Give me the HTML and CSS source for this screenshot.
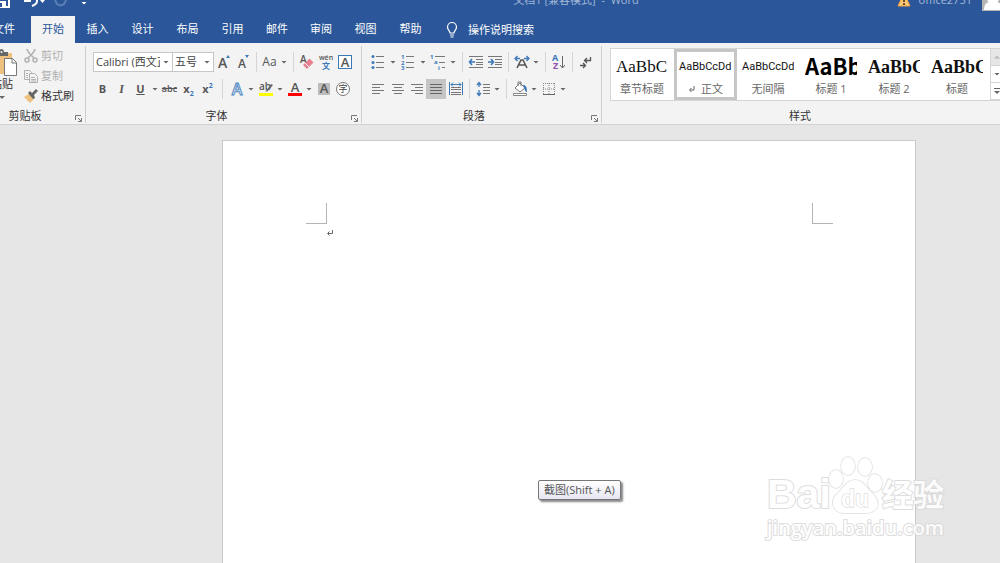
FILE: index.html
```html
<!DOCTYPE html>
<html lang="zh-CN">
<head>
<meta charset="utf-8">
<title>文档1 [兼容模式] - Word</title>
<link rel="stylesheet" href="styles.css">
</head>
<body>
<header class="top">
  <div class="titlebar">
    <div class="quick">
      <button class="q" aria-label="保存"><svg width="16" height="16" viewBox="0 0 16 16"><path d="M1 1h14v14H3l-2-2z" fill="none" stroke="#fff" stroke-width="2"/><path d="M4 9h8v6H4z" fill="#fff"/><path d="M6 11h2v4H6z" fill="#2b579a"/></svg></button>
      <button class="q undo" aria-label="撤消"><svg width="22" height="16" viewBox="0 0 22 16"><path d="M1 3v6h6M2 8c4-5 11-4 11 1 0 3-2 4-5 5" fill="none" stroke="#fff" stroke-width="2"/><path d="M16 8h5l-2.500 3z" fill="#fff"/></svg></button>
      <button class="q redo" aria-label="重复"><svg width="14" height="16" viewBox="0 0 14 16"><path d="M4 4a5 5 0 1 0 7 2M11 2v5H7" fill="none" stroke="#5f81b8" stroke-width="2"/></svg></button>
      <button class="q" aria-label="自定义"><svg width="8" height="16" viewBox="0 0 8 16"><path d="M1 7h6v1H1zM1.500 10h5L4 12.500z" fill="#fff"/></svg></button>
    </div>
    <div class="doc-name">文档1 [兼容模式] &nbsp;-&nbsp; Word</div>
    <div class="account">
      <svg width="14" height="14" viewBox="0 0 14 14"><path d="M7 0l6 13H1z" fill="#ffc977" stroke="#f1a33c"/><path d="M6 4h2v5H6zM6 10h2v2H6z" fill="#6b4a1c"/></svg>
      <span class="user">office2751</span>
      <svg class="avatar" width="22" height="22" viewBox="0 0 22 22"><rect width="22" height="22" fill="#b5b5b5"/><circle cx="11" cy="9" r="6" fill="#fff"/><path d="M2 21c0-6 3-8 6-8h6c3 0 6 2 6 8z" fill="#fff"/></svg>
    </div>
  </div>
  <nav class="tabs">
    <button class="tab file">文件</button>
    <button class="tab active">开始</button>
    <button class="tab">插入</button>
    <button class="tab">设计</button>
    <button class="tab">布局</button>
    <button class="tab">引用</button>
    <button class="tab short">邮件</button>
    <button class="tab short">审阅</button>
    <button class="tab">视图</button>
    <button class="tab">帮助</button>
    <button class="tell"><svg width="12" height="16" viewBox="0 0 12 16"><path d="M4 11c0-2-2.500-3-2.500-6a4.500 4.500 0 0 1 9 0c0 3-2.500 4-2.500 6zM4 13h4M4.500 15h3" fill="none" stroke="#fff" stroke-width="1.200"/></svg>操作说明搜索</button>
  </nav>
</header>

<main class="ribbon">
  <section class="group clipboard">
    <div class="clip-body">
      <button class="paste">
        <svg width="32" height="28" viewBox="0 0 32 28"><path d="M4 4h22v21H4z" fill="#eec27e"/><path d="M10 7V3h3c0-4 5-4 5 0h4v4z" fill="#686868"/><circle cx="15.500" cy="3" r="1" fill="#f3f3f3"/><path d="M18.500 9.500h8l4 4v13h-12z" fill="#fff" stroke="#777"/><path d="M26 9.500v4.500h4.500" fill="none" stroke="#777"/></svg>
        <span>粘贴</span><i class="tri"></i>
      </button>
      <div class="clip-list">
        <button class="clip off"><svg width="14" height="14" viewBox="0 0 14 14"><g fill="none" stroke="#b0b0b0" stroke-width="1.500"><path d="M3 0c1 4 4 6 7 9M11 0c-1 4-4 6-7 9"/><circle cx="3" cy="11" r="2"/><circle cx="11" cy="11" r="2"/></g></svg>剪切</button>
        <button class="clip off"><svg width="14" height="14" viewBox="0 0 14 14"><path d="M.5 1.500h5l2 2v7h-7z" fill="#f3f3f3" stroke="#b0b0b0"/><path d="M5.500 4.500h5l3 3v6h-8z" fill="#f3f3f3" stroke="#b0b0b0"/><path d="M2 4.500h2M2 6.500h2M2 8.500h2M7 8.500h4M7 10.500h5M7 12h5" stroke="#b0b0b0"/></svg>复制</button>
        <button class="clip"><svg width="14" height="14" viewBox="0 0 14 14"><path d="M0 8l5-3 5 5-4 4z" fill="#eec27e"/><path d="M4 4l2-2 2 2 4-4 2 2-4 4 1 3-2 1z" fill="#666"/></svg>格式刷</button>
      </div>
    </div>
    <div class="foot"><span>剪贴板</span><button class="launch" aria-label="剪贴板设置"><svg width="7" height="7" viewBox="0 0 7 7"><path d="M.5 5V.5H6M3 3l3 3M6.500 3v3.500H3" fill="none" stroke="#777"/></svg></button></div>
  </section>

  <section class="group font">
    <div class="row">
      <label class="combo family"><select aria-label="字体"><option>Calibri (西文正文)</option></select><i class="tri"></i></label>
      <label class="combo size"><select aria-label="字号"><option>五号</option></select><i class="tri"></i></label>
      <button class="tool" aria-label="增大字号"><svg width="16" height="16" viewBox="0 0 16 16"><text x="2" y="14" class="letter l14">A</text><path d="M10 4l2-3 2 3z" fill="#3c78b8"/></svg></button>
      <button class="tool" aria-label="减小字号"><svg width="16" height="16" viewBox="0 0 16 16"><text x="3" y="14" class="letter l12">A</text><path d="M10 1h4l-2 3z" fill="#3c78b8"/></svg></button>
      <i class="sep"></i>
      <button class="tool case">Aa</button><button class="drop" aria-label="更改大小写选项"><i class="tri"></i></button>
      <i class="sep"></i>
      <button class="tool" aria-label="清除格式"><svg width="16" height="16" viewBox="0 0 16 16"><text x="1" y="9" class="letter l10">A</text><path d="M4 11l6.500-6.500 4 4L8 15z" fill="#e8808f"/><path d="M6 9l4 4" stroke="#f3f3f3"/></svg></button>
      <button class="tool" aria-label="拼音指南"><svg width="16" height="16" viewBox="0 0 16 16"><text x="8" y="6" text-anchor="middle" class="letter l7">wén</text><text x="8" y="15" text-anchor="middle" class="blue l8">文</text></svg></button>
      <button class="tool" aria-label="字符边框"><svg width="16" height="16" viewBox="0 0 16 16"><rect x="1.500" y="1.500" width="13" height="13" fill="#fff" stroke="#3c78b8"/><text x="8" y="13" text-anchor="middle" class="letter l13">A</text></svg></button>
    </div>
    <div class="row">
      <button class="tool bold">B</button>
      <button class="tool italic">I</button>
      <button class="tool under">U</button><button class="drop" aria-label="下划线选项"><i class="tri"></i></button>
      <button class="tool strike">abc</button>
      <button class="tool script">x<sub>2</sub></button>
      <button class="tool script">x<sup>2</sup></button>
      <i class="sep wide"></i>
      <button class="tool" aria-label="文本效果"><svg width="16" height="16" viewBox="0 0 16 16"><text x="8" y="14" text-anchor="middle" class="effect">A</text></svg></button><button class="drop" aria-label="文本效果选项"><i class="tri"></i></button>
      <button class="tool" aria-label="突出显示"><svg width="16" height="16" viewBox="0 0 16 16"><text x="1" y="9" class="letter l10">ab</text><path d="M8 10l5-7 2 1-5 6-3 1z" fill="#666"/><path d="M1 12h14v3H1z" fill="#ff0"/></svg></button><button class="drop" aria-label="突出显示颜色"><i class="tri"></i></button>
      <button class="tool" aria-label="字体颜色"><svg width="16" height="16" viewBox="0 0 16 16"><text x="8" y="11" text-anchor="middle" class="letter l13">A</text><path d="M1 12h14v3H1z" fill="red"/></svg></button><button class="drop" aria-label="字体颜色选项"><i class="tri"></i></button>
      <button class="tool" aria-label="字符底纹"><svg width="16" height="16" viewBox="0 0 16 16"><path d="M2 2h12v12H2z" fill="#bcbcbc"/><text x="8" y="12" text-anchor="middle" class="letter l13">A</text></svg></button>
      <button class="tool" aria-label="带圈字符"><svg width="16" height="16" viewBox="0 0 16 16"><circle cx="8" cy="8" r="6.500" fill="#fff" stroke="#777"/><text x="8" y="11" text-anchor="middle" class="glyph">字</text></svg></button>
    </div>
    <div class="foot"><span>字体</span><button class="launch" aria-label="字体设置"><svg width="7" height="7" viewBox="0 0 7 7"><path d="M.5 5V.5H6M3 3l3 3M6.500 3v3.500H3" fill="none" stroke="#777"/></svg></button></div>
  </section>

  <section class="group para">
    <div class="row">
      <button class="tool list" aria-label="项目符号"><svg width="16" height="16" viewBox="0 0 16 16"><path d="M6 2.500h8M6 8.500h8M6 13.500h8" stroke="#777"/><g fill="#3c78b8"><circle cx="3" cy="2.500" r="1.500"/><circle cx="3" cy="8.500" r="1.500"/><circle cx="3" cy="13.500" r="1.500"/></g></svg></button><button class="drop" aria-label="项目符号选项"><i class="tri"></i></button>
      <button class="tool list" aria-label="编号"><svg width="16" height="16" viewBox="0 0 16 16"><path d="M6 2.500h8M6 8.500h8M6 13.500h8" stroke="#777"/><text x="1" y="5" class="blue l6">1</text><text x="1" y="11" class="blue l6">2</text><text x="1" y="16" class="blue l6">3</text></svg></button><button class="drop" aria-label="编号选项"><i class="tri"></i></button>
      <button class="tool list" aria-label="多级列表"><svg width="16" height="16" viewBox="0 0 16 16"><path d="M5 2.500h10M9 8.500h6M12 13.500h3" stroke="#777"/><text x="0" y="5" class="blue l6">1</text><text x="4" y="10" class="blue l6">a</text><text x="8" y="16" class="blue l6">i</text></svg></button><button class="drop" aria-label="多级列表选项"><i class="tri"></i></button>
      <i class="sep"></i>
      <button class="tool" aria-label="减少缩进量"><svg width="16" height="16" viewBox="0 0 16 16"><path d="M1 2.500h14M8 5.500h7M8 8.500h7M8 10.500h7M1 13.500h14" stroke="#777"/><path d="M7 8H2M4 5L1.500 8 4 11" fill="none" stroke="#3c78b8" stroke-width="1.600"/></svg></button>
      <button class="tool" aria-label="增加缩进量"><svg width="16" height="16" viewBox="0 0 16 16"><path d="M1 2.500h14M8 5.500h7M8 8.500h7M8 10.500h7M1 13.500h14" stroke="#777"/><path d="M1 8h5M4 5l2.500 3L4 11" fill="none" stroke="#3c78b8" stroke-width="1.600"/></svg></button>
      <i class="sep"></i>
      <button class="tool" aria-label="中文版式"><svg width="16" height="16" viewBox="0 0 16 16"><path d="M3 14l4-8h2l4 8M5 11h6" fill="none" stroke="#555" stroke-width="1.600"/><path d="M6 4.500H2M3.500 2L1 4.500 3.500 7M10 4.500h4M12.500 2L15 4.500 12.500 7" fill="none" stroke="#3c78b8" stroke-width="1.300"/></svg></button><button class="drop" aria-label="中文版式选项"><i class="tri"></i></button>
      <i class="sep"></i>
      <button class="tool" aria-label="排序"><svg width="16" height="16" viewBox="0 0 16 16"><text x="1" y="7" class="blue l9">A</text><text x="2" y="15" class="purple">Z</text><path d="M11.500 2v12M9 11l2.500 3 2.500-3" fill="none" stroke="#666"/></svg></button>
      <i class="sep"></i>
      <button class="tool" aria-label="显示编辑标记"><svg width="16" height="16" viewBox="0 0 16 16"><path d="M12.500 3v3.500H7M9 4L6.500 6.500 9 9M2 11.500h5M5 9l2.500 2.500L5 14" fill="none" stroke="#555" stroke-width="1.300"/></svg></button>
    </div>
    <div class="row">
      <button class="tool list" aria-label="左对齐"><svg width="16" height="16" viewBox="0 0 16 16"><path d="M2 3.500h12M2 6.500h8M2 9.500h12M2 12.500h8" stroke="#777"/></svg></button>
      <button class="tool" aria-label="居中"><svg width="16" height="16" viewBox="0 0 16 16"><path d="M2 3.500h12M4 6.500h8M2 9.500h12M4 12.500h8" stroke="#777"/></svg></button>
      <button class="tool" aria-label="右对齐"><svg width="16" height="16" viewBox="0 0 16 16"><path d="M2 3.500h12M6 6.500h8M2 9.500h12M6 12.500h8" stroke="#777"/></svg></button>
      <button class="tool list on" aria-label="两端对齐"><svg width="16" height="16" viewBox="0 0 16 16"><path d="M2 3.500h12M2 6.500h12M2 9.500h12M2 12.500h12" stroke="#666"/></svg></button>
      <button class="tool" aria-label="分散对齐"><svg width="16" height="16" viewBox="0 0 16 16"><path d="M3 6.500h10M3 8.500h10M3 11.500h10M3 13.500h10" stroke="#777"/><path d="M1.500 1v13M14.500 1v13M3 3.500h10M5 1.500l-2 2 2 2M11 1.500l2 2-2 2" fill="none" stroke="#3c78b8"/></svg></button>
      <i class="sep"></i>
      <button class="tool" aria-label="行距"><svg width="16" height="16" viewBox="0 0 16 16"><path d="M8 3.500h7M8 6.500h7M8 9.500h7M8 12.500h7" stroke="#777"/><path d="M4 2v4M2 4l2-2.500L6 4M4 9v5M2 12l2 2.500L6 12" fill="none" stroke="#3c78b8" stroke-width="1.300"/></svg></button><button class="drop" aria-label="行距选项"><i class="tri"></i></button>
      <i class="sep"></i>
      <button class="tool" aria-label="底纹"><svg width="16" height="16" viewBox="0 0 16 16"><path d="M3 7l5-5 5 5-5 4zM6 5V1h3v4" fill="#fff" stroke="#777"/><path d="M11 4c3 0 4 2 4 7-2 0-2-3-3-4z" fill="#3c78b8"/><path d="M1.500 12.500h13v2h-13z" fill="#fff" stroke="#888"/></svg></button><button class="drop" aria-label="底纹选项"><i class="tri"></i></button>
      <button class="tool" aria-label="边框"><svg width="16" height="16" viewBox="0 0 16 16"><path d="M2.500 2v11M13.500 2v11M2 2.500h12M8 2v11M2 8h12" fill="none" stroke="#888" stroke-dasharray="1 1"/><path d="M2 13.500h12" stroke="#666"/></svg></button><button class="drop" aria-label="边框选项"><i class="tri"></i></button>
    </div>
    <div class="foot"><span>段落</span><button class="launch" aria-label="段落设置"><svg width="7" height="7" viewBox="0 0 7 7"><path d="M.5 5V.5H6M3 3l3 3M6.500 3v3.500H3" fill="none" stroke="#777"/></svg></button></div>
  </section>

  <section class="group styles">
    <div class="gallery">
      <button class="style"><span class="sample serif">AaBbC</span><span class="cap">章节标题</span></button>
      <button class="style picked"><span class="sample body">AaBbCcDd</span><span class="cap"><svg width="7" height="8" viewBox="0 0 7 8"><path d="M6 1v4H2M3.500 3L1.500 5l2 2" fill="none" stroke="#666"/></svg> 正文</span></button>
      <button class="style"><span class="sample body">AaBbCcDd</span><span class="cap">无间隔</span></button>
      <button class="style"><span class="sample h1">AaBb</span><span class="cap">标题 1</span></button>
      <button class="style"><span class="sample serif strong">AaBbC</span><span class="cap">标题 2</span></button>
      <button class="style"><span class="sample serif strong">AaBbC</span><span class="cap">标题</span></button>
      <div class="scroll">
        <button class="dim" aria-label="上一行"><i class="tri up"></i></button>
        <button aria-label="下一行"><i class="tri"></i></button>
        <button aria-label="更多样式"><i class="bar"></i><i class="tri"></i></button>
      </div>
    </div>
    <div class="foot"><span>样式</span></div>
  </section>
</main>

<div class="workspace">
  <article class="page">
    <div class="corners"><i class="corner left"></i><i class="corner right"></i></div>
    <p class="line"><svg width="8" height="8" viewBox="0 0 8 8"><path d="M6.500 1v3.500H2M3.500 2.500l-2 2 2 2" fill="none" stroke="#666"/></svg></p>
  </article>
</div>

<div class="tip" role="tooltip">截图(Shift + A)</div>

<div class="mark">
  <div class="brand">
    <span class="bai">Bai</span>
    <span class="paw"><svg width="54" height="60" viewBox="0 0 54 60"><g fill="#fff" stroke="#d8d8d8" stroke-width="1.500"><ellipse cx="8" cy="24" rx="7" ry="9"/><ellipse cx="20" cy="11" rx="7" ry="9"/><ellipse cx="37" cy="12" rx="7" ry="9"/><ellipse cx="47" cy="28" rx="7" ry="9"/><path d="M27 25c-8 0-11 7-16 12-6 5-8 11-4 17 4 5 11 4 20 4s17 1 21-4c4-6 1-12-5-17-5-5-8-12-16-12z"/></g><text x="27" y="52" text-anchor="middle" class="du">du</text></svg></span>
    <span class="exp">经验</span>
  </div>
  <div class="url">jingyan.baidu.com</div>
</div>
</body>
</html>
```
FILE: styles.css
```css
* { box-sizing: border-box; }
body {
  margin: 0;
  min-height: 100vh;
  display: flex;
  flex-direction: column;
  overflow: hidden;
  background: #e6e6e6;
  color: #333;
  font: 11px/14px "Open Sans", "Noto Sans CJK SC", sans-serif;
}
button {
  border: 0;
  padding: 0;
  background: none;
  color: inherit;
  font: inherit;
}
svg { display: block; flex: none; overflow: visible; }

/* title bar and tabs */
.top { margin-top: -16px; background: #2b579a; color: #fff; }
.titlebar {
  height: 32px;
  display: grid;
  grid-template-columns: 1fr auto 1fr;
  align-items: center;
}
.quick { display: flex; align-items: center; margin-left: -6px; }
.q { margin-right: 14px; }
.undo { margin-right: 8px; }
.redo { margin-right: 12px; }
.doc-name { padding-left: 152px; color: #a3b7d8; }
.account { display: flex; align-items: center; justify-content: flex-end; gap: 8px; margin-right: -4px; }
.user { color: #a3b7d8; }
.avatar { margin-left: 2px; }
.tabs { display: flex; height: 27px; }
.tab { width: 45px; flex: none; padding-bottom: 2px; }
.tab.short { width: 44px; }
.tab.file { width: 48px; margin-left: -17px; padding-right: 6px; }
.tab.active { width: 44px; background: #f3f3f3; color: #2b579a; }
.tell { display: flex; align-items: center; gap: 10px; margin-left: 13px; }

/* ribbon */
.ribbon {
  display: flex;
  padding: 3px 0 1px;
  background: #f3f3f3;
  border-bottom: 1px solid #d2d2d2;
}
.group {
  display: flex;
  flex-direction: column;
  flex: none;
  gap: 7px;
  height: 77px;
  padding: 6px 7px 0;
  border-right: 1px solid #cfcfcf;
}
.row { display: flex; flex: none; height: 20px; }
.foot {
  display: grid;
  grid-template-columns: 1fr 14px;
  align-items: center;
  margin-top: auto;
  height: 14px;
  flex: none;
  text-align: center;
}
.launch { justify-self: end; margin: 4px -4px 0 0; }
.tri {
  flex: none;
  width: 6px;
  height: 3px;
  background: #666;
  clip-path: polygon(0 0, 100% 0, 50% 100%);
}
.tri.up { clip-path: polygon(50% 0, 100% 100%, 0 100%); background: #bbb; }
.tool {
  display: flex;
  align-items: center;
  justify-content: center;
  width: 19px;
  flex: none;
  color: #555;
}
.tool.list { width: 20px; }
.tool.on { background: #c5c5c5; }
.drop { display: flex; align-items: center; justify-content: center; width: 10px; flex: none; }
.sep { width: 8px; flex: none; background: linear-gradient(#d5d5d5, #d5d5d5) center / 1px 100% no-repeat; }
.sep.wide { width: 10px; }

.clipboard { width: 107px; margin-left: -21px; padding-top: 0; gap: 0; }
.clip-body { display: flex; gap: 6px; }
.paste { display: flex; flex-direction: column; align-items: center; width: 32px; padding: 3px 0 0; }
.paste .tri { margin-top: 5px; }
.clip-list { display: flex; flex-direction: column; }
.clip { display: flex; align-items: center; gap: 3px; height: 20px; }
.clip.off { color: #b0b0b0; }

.font { width: 276px; }
.combo {
  display: flex;
  align-items: center;
  gap: 3px;
  background: #fff;
  border: 1px solid #c6c6c6;
  padding-right: 3px;
  color: #444;
}
.combo select {
  flex: 1;
  width: 0;
  min-width: 0;
  border: 0;
  padding: 0 0 0 2px;
  background: none;
  color: inherit;
  font: inherit;
  appearance: none;
  overflow: hidden;
}
.family { width: 80px; margin-right: -1px; }
.size { width: 42px; }
.letter { font-family: "Open Sans", sans-serif; font-weight: 600; fill: #555; }
.blue { font-family: "Open Sans", "Noto Sans CJK SC", sans-serif; font-weight: 700; fill: #3c78b8; }
.purple { font: 700 9px "Open Sans", sans-serif; fill: #9251b0; }
.glyph { font: 9px "Noto Sans CJK SC", sans-serif; fill: #444; }
.effect { font: 600 16px "Open Sans", sans-serif; fill: #fff; stroke: #4d86c2; stroke-width: 1px; }
.l6 { font-size: 6px; }
.l7 { font-size: 7px; }
.l8 { font-size: 8px; }
.l9 { font-size: 9px; }
.l10 { font-size: 10px; }
.l12 { font-size: 12px; }
.l13 { font-size: 13px; }
.l14 { font-size: 14px; }
.case { font-size: 12px; }
.bold { font-weight: 700; }
.italic { font: italic 700 12px "Liberation Serif", serif; }
.under { font-weight: 700; text-decoration: underline; }
.strike { font-size: 9px; font-weight: 600; text-decoration: line-through; }
.script { font-weight: 700; }
.script sub, .script sup { color: #3c78b8; font-size: 7px; line-height: 7px; }
.script sub { align-self: flex-end; margin-bottom: 2px; }
.script sup { align-self: flex-start; margin-top: 3px; }
.para { width: 240px; padding-left: 6px; }

/* styles gallery */
.styles { flex: 1 0 399px; padding: 2px 0 0 8px; border: 0; }
.gallery { display: flex; flex: none; height: 53px; background: #fff; border: 1px solid #d5d5d5; overflow: hidden; }
.style {
  display: flex;
  flex-direction: column;
  justify-content: space-between;
  width: 63px;
  flex: none;
  padding: 4px 6px 4px 5px;
}
.picked { border: 3px solid #c6c6c6; padding: 1px 2px; }
.sample {
  display: block;
  height: 26px;
  line-height: 28px;
  overflow: hidden;
  white-space: nowrap;
  text-align: left;
  color: #111;
}
.serif { font-family: "Liberation Serif", serif; font-size: 17px; }
.strong { font-weight: 700; font-size: 18px; }
.body { font-family: Roboto, sans-serif; }
.h1 { font-family: "Noto Sans CJK SC", sans-serif; font-size: 22px; line-height: 24px; font-weight: 700; color: #000; }
.cap { display: flex; align-items: center; justify-content: center; gap: 3px; color: #666; white-space: pre; }
.scroll { display: flex; flex-direction: column; width: 13px; flex: none; margin-left: 1px; border-left: 1px solid #d5d5d5; }
.scroll button {
  flex: 1;
  display: flex;
  flex-direction: column;
  align-items: center;
  justify-content: center;
  gap: 2px;
  border-bottom: 1px solid #d5d5d5;
}
.scroll .dim { background: #e6e6e6; }
.bar { width: 6px; height: 1px; background: #666; }

/* document */
.workspace { flex: 1; display: flex; padding: 15px 84px 0 222px; }
.page { flex: 1; padding: 62px 82px 0 83px; background: #fff; border: 1px solid #c9c9c9; border-bottom: 0; }
.corners { display: flex; justify-content: space-between; }
.corner { width: 21px; height: 21px; border-bottom: 1px solid #b4b4b4; }
.corner.left { border-right: 1px solid #b4b4b4; }
.corner.right { border-left: 1px solid #b4b4b4; }
.line { margin: 5px 0 0 20px; }

.tip {
  position: absolute;
  left: 538px;
  top: 480px;
  padding: 2px 5px;
  border: 1px solid #767676;
  border-radius: 2px;
  background: linear-gradient(#fff, #e6e6f2);
  box-shadow: 2px 2px 2px #888;
  color: #555;
}

/* watermark */
.mark {
  position: absolute;
  left: 767px;
  top: 455px;
  color: #fff;
  font-family: "Liberation Sans", "Noto Sans CJK SC", sans-serif;
  font-weight: 700;
  -webkit-text-stroke: 2px #d8d8d8;
  paint-order: stroke fill;
  opacity: .85;
}
.brand { display: flex; align-items: flex-end; height: 60px; }
.bai { font-size: 41px; line-height: 42px; width: 61px; }
.du { font: 700 23px "Liberation Sans", sans-serif; fill: #fff; stroke: #c8c8c8; }
.exp { font-size: 31px; line-height: 38px; }
.url { font-family: "Open Sans", sans-serif; font-weight: 600; font-size: 20px; line-height: 26px; }
```
